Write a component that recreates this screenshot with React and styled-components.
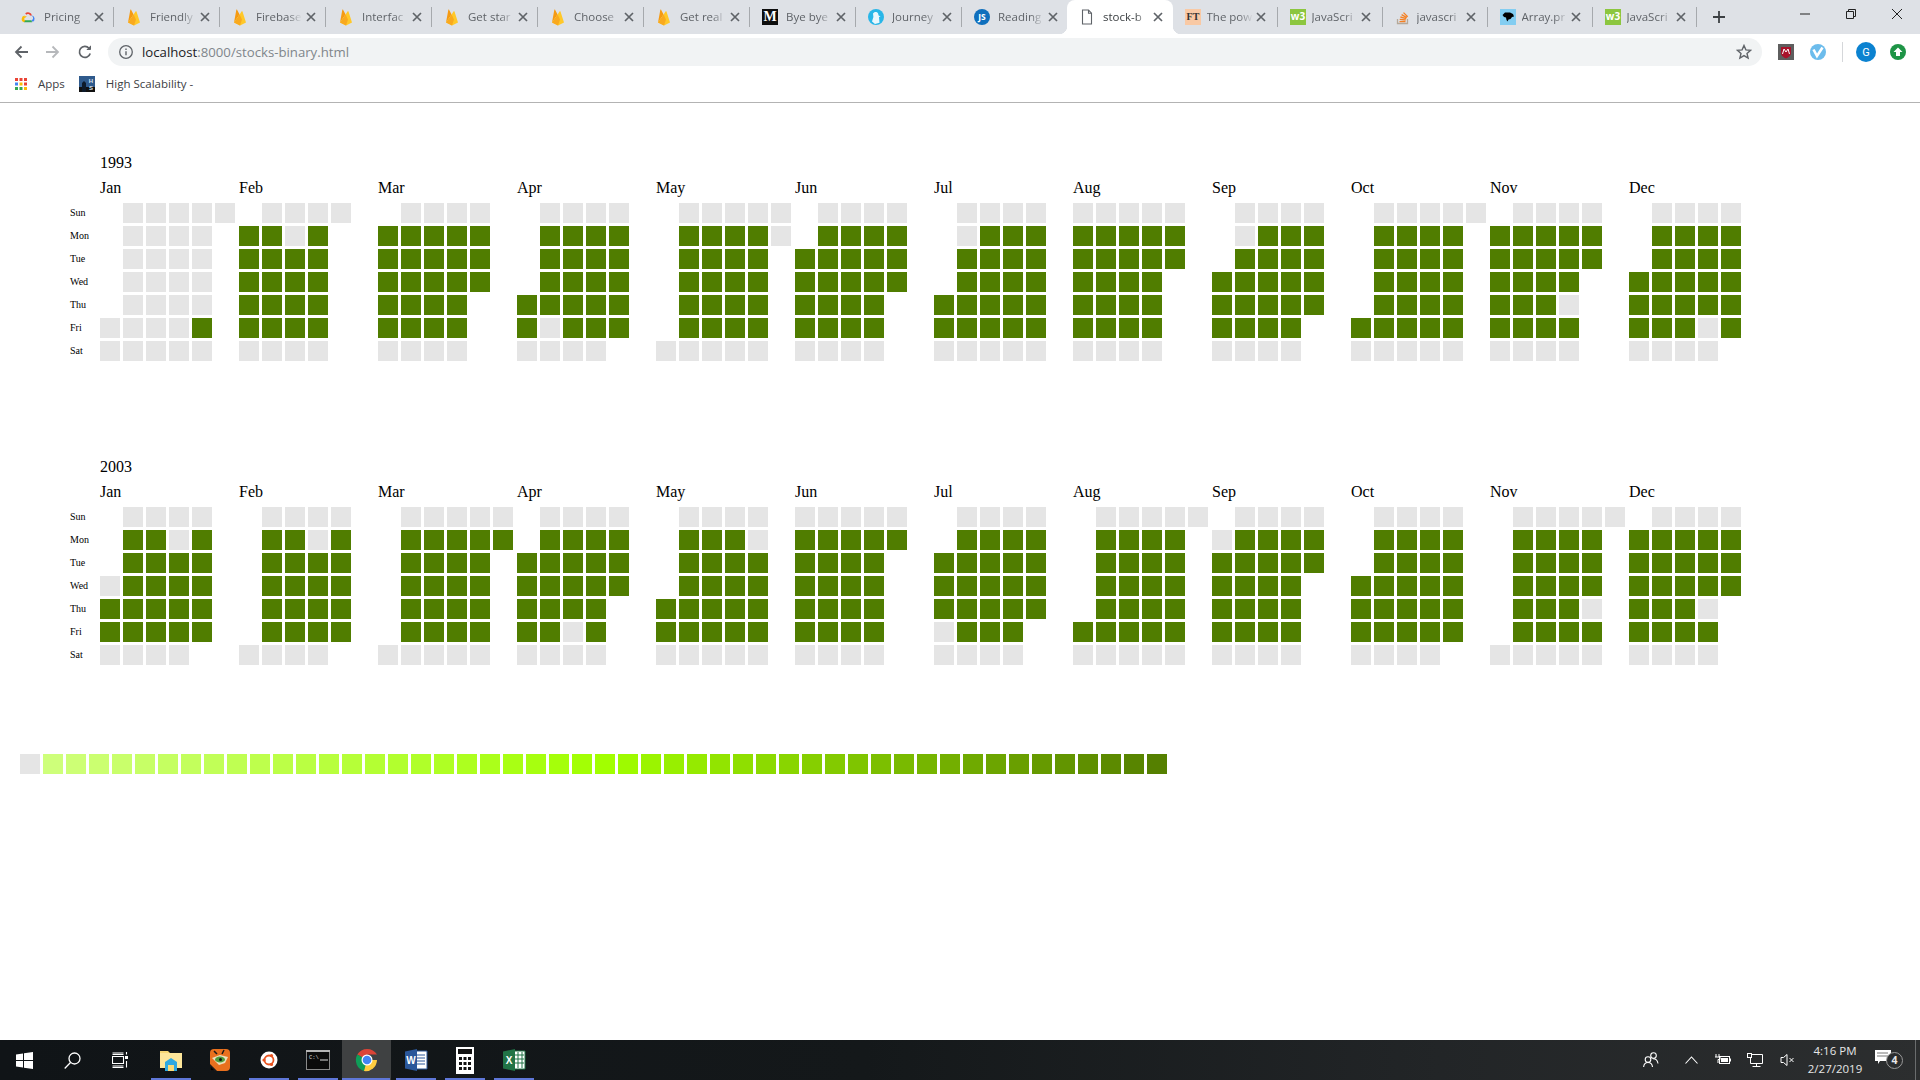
import React from 'react';
import styled, { createGlobalStyle } from 'styled-components';

const Global = createGlobalStyle`
  html, body { margin: 0; padding: 0; background: #fff; }
  body { font-family: "Liberation Serif", serif; overflow: hidden; }
`;

const UI = '"Open Sans", "Noto Sans", sans-serif';

const Page = styled.div`
  width: 1920px; height: 1080px; display: flex; flex-direction: column; overflow: hidden;
`;
const BrowserChrome = styled.header`flex: none; background: #fff;`;
const TabStrip = styled.div`
  height: 34px; background: #dee1e6; display: flex; align-items: stretch; padding-left: 8px;
`;
const Tab = styled.div`
  position: relative; flex: none; width: ${p => p.$w}px; height: 34px; display: flex; align-items: center;
  background: ${p => (p.$active ? '#fff' : 'transparent')};
  border-radius: ${p => (p.$active ? '8px 8px 0 0' : '0')};
  ${p => p.$active ? `
    &::before, &::after { content: ''; position: absolute; bottom: 0; width: 8px; height: 8px; }
    &::before { left: -8px; background: radial-gradient(circle at 0 0, #dee1e6 8px, #fff 8.5px); }
    &::after { right: -8px; background: radial-gradient(circle at 100% 0, #dee1e6 8px, #fff 8.5px); }
  ` : ''}
`;
const FaviconSlot = styled.span`
  flex: none; width: 16px; height: 16px; margin-left: 12px; display: flex; align-items: center; justify-content: center;
`;
const TabTitle = styled.span`
  flex: none; width: 48px; margin-left: ${p => (p.$late ? 5.5 : 8)}px; overflow: hidden; white-space: nowrap;
  font: 11.5px/16px ${UI}; color: ${p => (p.$active ? '#3c4043' : '#5f6368')};
  -webkit-mask-image: linear-gradient(to right, #000 32px, transparent 46px);
  mask-image: linear-gradient(to right, #000 32px, transparent 46px);
`;
const TabClose = styled.svg`flex: none; width: 10px; height: 10px; margin-left: ${p => (p.$late ? 1 : 2)}px;`;
const TabSep = styled.span`
  position: absolute; right: 0; top: 7px; width: 1px; height: 20px; background: #a6a9ad;
`;
const NewTab = styled.svg`flex: none; width: 12px; height: 12px; margin: 11px 0 0 16px;`;
const WindowControls = styled.div`margin-left: auto; display: flex;`;
const WinButton = styled.span`
  width: 46px; height: 28px; display: flex; align-items: center; justify-content: center;
`;
const Toolbar = styled.div`
  height: 34px; box-sizing: border-box; display: flex; align-items: center; padding: 2px 6px 0 5px; background: #fff;
`;
const NavButton = styled.span`
  flex: none; width: 32px; height: 28px; display: flex; align-items: center; justify-content: center;
`;
const Omnibox = styled.div`
  flex: 1; height: 28px; margin: 0 8px 0 7px; border-radius: 14px; background: #f1f3f4;
  display: flex; align-items: center; padding: 0 10px;
`;
const Url = styled.span`
  margin-left: 8px; font: 13.2px/28px ${UI}; color: #80868b; white-space: nowrap;
`;
const UrlHost = styled.span`color: #202124;`;
const StarSlot = styled.span`margin-left: auto; display: flex; width: 16px; justify-content: center;`;
const ToolbarSep = styled.span`flex: none; width: 1px; height: 20px; background: #d5d7da; margin: 0 7px 0 8px;`;
const BookmarkBar = styled.div`
  height: 34px; box-sizing: content-box; border-bottom: 1px solid #b3b3b3; display: flex; align-items: center; padding-left: 15px;
`;
const BookmarkInner = styled.div`display: flex; align-items: center; margin-top: -2px;`;
const Bookmark = styled.span`
  display: flex; align-items: center; gap: 11px; margin-right: 14px;
  font: 11.5px/16px ${UI}; color: #3c4043; white-space: nowrap;
`;

const Main = styled.main`flex: 1; padding: 51px 0 0 20px; min-height: 0;`;
const YearBlock = styled.section`margin-bottom: ${p => p.$after}px;`;
const YearLabel = styled.div`
  margin-left: 80px; height: 25px; font: 16px/18px "Liberation Serif", serif; color: #000;
`;
const YearBody = styled.div`display: flex; align-items: flex-end;`;
const DayColumn = styled.div`
  flex: none; width: 80px; padding-left: 50px; box-sizing: border-box; display: grid; grid-auto-rows: 20px; row-gap: 3px;
`;
const DayLabel = styled.span`
  font: 10px/20px "Liberation Serif", serif; color: #000;
`;
const MonthRow = styled.div`display: flex;`;
const Month = styled.div`flex: none; width: 139px;`;
const MonthName = styled.div`
  height: 24px; font: 16px/18px "Liberation Serif", serif; color: #000;
`;
const MonthGrid = styled.div`
  display: grid; grid-template-columns: repeat(6, 20px); grid-auto-rows: 20px; gap: 3px;
`;
const Cell = styled.span`
  background: ${p => (p.$kind === '1' ? '#507d00' : p.$kind === '0' ? '#e5e5e5' : 'transparent')};
`;
const Legend = styled.div`display: flex; gap: 3px;`;
const Swatch = styled.span`flex: none; width: 20px; height: 20px;`;

const Taskbar = styled.footer`
  flex: none; height: 40px; display: flex; align-items: stretch; color: #fff;
  background: linear-gradient(90deg, #101417 0%, #14181a 45%, #222527 75%, #2c2e2f 100%);
`;
const SystemButton = styled.span`
  flex: none; width: 48px; display: flex; align-items: center; justify-content: center;
`;
const AppGroup = styled.div`display: flex; margin-left: 2px;`;
const AppButton = styled.span`
  position: relative; flex: none; width: 49px; display: flex; align-items: center; justify-content: center;
  background: ${p => (p.$active ? '#3f4142' : 'transparent')};
  &::after {
    content: ''; position: absolute; bottom: 0; height: 2px;
    left: ${p => (p.$active ? '0' : '4.5px')}; right: ${p => (p.$active ? '1px' : '4.5px')};
    background: ${p => (p.$open ? '#5f77d8' : 'transparent')};
  }
`;
const Tray = styled.div`margin-left: auto; display: flex; align-items: stretch; padding-right: 4px;`;
const TrayIcon = styled.span`
  flex: none; width: 32px; display: flex; align-items: center; justify-content: center;
  margin-right: ${p => p.$mr || 0}px;
`;
const Clock = styled.div`
  flex: none; width: 64px; display: flex; flex-direction: column; align-items: center; justify-content: center;
  font: 11.5px/18px ${UI}; color: #e6e6e6; white-space: nowrap;
`;
const Notify = styled.span`
  position: relative; flex: none; width: 40px; margin-right: 8px; display: flex; align-items: center; justify-content: center;
`;
const NotifyGlyph = styled.svg`width: 16px; height: 14px; margin: -6px 0 0 -8px;`;
const NotifyBadge = styled.span`
  position: absolute; left: 19px; top: 12px; width: 15px; height: 15px; border-radius: 50%;
  background: #2b2d2e; border: 1px solid #9a9a9a; font: 700 10.5px/15px ${UI}; text-align: center; color: #e8e8e8;
`;
const DesktopEdge = styled.span`flex: none; width: 1px; background: #6a6c6d;`;

const SerifMark = styled.span`
  width: 16px; height: 16px; display: block; text-align: center;
  background: ${p => p.$bg}; color: ${p => p.$fg};
  font: 700 ${p => p.$size}px/16px "Liberation Serif", serif;
`;
const JsBadge = styled.span`
  width: 16px; height: 16px; border-radius: 50%; display: block; text-align: center;
  background: #0f6fbd; color: #fff; font: 700 8.5px/16px ${UI};
`;
const W3Badge = styled.span`
  width: 16px; height: 16px; display: block; text-align: center; background: #8cc63f; color: #fff;
  font: 700 10px/14px ${UI};
`;

const Flame = () => (
  <svg width="14" height="17" viewBox="0 0 14 17">
    <path d="M1 13.5 3.3 1c.1-.5.7-.6.9-.1L6.6 5.5 1 13.5z" fill="#f59a12" />
    <path d="M6.6 5.5 8.5 2.600c.2-.4.8-.4 1 0L13 13.5 7 16.5 1 13.500z" fill="#ffc829" />
    <path d="M1 13.500 6.600 5.500 9 10.500 7 16.500z" fill="#f9a91e" />
  </svg>
);
const GCloud = () => (
  <svg width="16" height="16" viewBox="0 0 16 16">
    <path d="M5.2 4.2A4.2 4.2 0 0 1 12 6.4l-2 .2a2.2 2.2 0 0 0-3.7-.9z" fill="#ea4335" />
    <path d="M12 6.4a3.4 3.4 0 0 1 .6 6.4l-1.3-1.6a1.5 1.5 0 0 0-1.3-4.6z" fill="#4285f4" />
    <path d="M4 13.2h8.2l-.9-2H4.2z" fill="#34a853" />
    <path d="M4.6 6.6A3.4 3.4 0 0 0 4 13.2l1.2-1.9a1.5 1.5 0 0 1 .5-2.9l1-1.4a3 3 0 0 0-2.1.6z" fill="#fbbc05" />
  </svg>
);
const Journey = () => (
  <svg width="16" height="16" viewBox="0 0 16 16">
    <circle cx="8" cy="8" r="8" fill="#29b6e8" />
    <path d="M5 4.5c1-2 4-2.2 5-.2l.6 2.2 2 1-1.6.6.5 5.6L7 15 4 12.6 5.4 8z" fill="#e9f7fd" />
  </svg>
);
const DocIcon = () => (
  <svg width="12" height="16" viewBox="0 0 12 16" fill="#fff" stroke="#5f6368" strokeWidth="1.1">
    <path d="M1.5 1h6l3 3.2V15h-9z" /><path d="M7.5 1v3.2h3" fill="none" />
  </svg>
);
const StackIcon = () => (
  <svg width="16" height="16" viewBox="0 0 16 16" fill="none">
    <path d="M2.5 10v4.5h10V10" stroke="#b5a99a" strokeWidth="1.3" />
    <path d="M4.5 12.6h6M4.7 10.4l6 .6M5.4 8l5.8 1.6M6.6 5.6l5.2 3M8.5 3.6l4.2 4.2" stroke="#f48024" strokeWidth="1.3" />
  </svg>
);
const ArrayIcon = () => (
  <svg width="16" height="16" viewBox="0 0 16 16">
    <rect width="16" height="16" fill="#83cdf1" />
    <path d="M2.5 6 5 3.5h5l3 1.5 1 2.5-2 .5-1.5 2-2 .5-1 2-1-1.5-.5-2.5-2-.5z" fill="#000" />
  </svg>
);

const tabs = [
  ['Pricing', <GCloud />, 106], ['Friendly', <Flame />, 106], ['Firebase', <Flame />, 106], ['Interfac', <Flame />, 106],
  ['Get star', <Flame />, 106], ['Choose', <Flame />, 106], ['Get real', <Flame />, 106],
  ['Bye bye', <SerifMark $bg="#0e0e0e" $fg="#fff" $size={14}>M</SerifMark>, 106],
  ['Journey', <Journey />, 106], ['Reading', <JsBadge>JS</JsBadge>, 105], ['stock-b', <DocIcon />, 106],
  ['The pow', <SerifMark $bg="#f9c9a4" $fg="#333" $size={10}>FT</SerifMark>, 105],
  ['JavaScri', <W3Badge>w3</W3Badge>, 105], ['javascri', <StackIcon />, 105], ['Array.pr', <ArrayIcon />, 105],
  ['JavaScri', <W3Badge>w3</W3Badge>, 104],
];
const ACTIVE_TAB = 10;
const DIVIDERLESS_TAB = 9;

const days = ['Sun', 'Mon', 'Tue', 'Wed', 'Thu', 'Fri', 'Sat'];
const months = ['Jan', 'Feb', 'Mar', 'Apr', 'May', 'Jun', 'Jul', 'Aug', 'Sep', 'Oct', 'Nov', 'Dec'];

const y1993 = [
  ['.00000', '.0000', '.0000', '.0000', '.0000', '00001', '00000'],
  ['.0000', '1101', '1111', '1111', '1111', '1111', '0000'],
  ['.0000', '11111', '11111', '11111', '1111', '1111', '0000'],
  ['.0000', '.1111', '.1111', '.1111', '11111', '10111', '0000'],
  ['.00000', '.11110', '.1111', '.1111', '.1111', '.1111', '00000'],
  ['.0000', '.1111', '11111', '11111', '1111', '1111', '0000'],
  ['.0000', '.0111', '.1111', '.1111', '11111', '11111', '00000'],
  ['00000', '11111', '11111', '1111', '1111', '1111', '0000'],
  ['.0000', '.0111', '.1111', '11111', '11111', '1111', '0000'],
  ['.00000', '.1111', '.1111', '.1111', '.1111', '11111', '00000'],
  ['.0000', '11111', '11111', '1111', '1110', '1111', '0000'],
  ['.0000', '.1111', '.1111', '11111', '11111', '11101', '0000'],
];
const y2003 = [
  ['.0000', '.1101', '.1111', '01111', '11111', '11111', '0000'],
  ['.0000', '.1101', '.1111', '.1111', '.1111', '.1111', '0000'],
  ['.00000', '.11111', '.1111', '.1111', '.1111', '.1111', '00000'],
  ['.0000', '.1111', '11111', '11111', '1111', '1101', '0000'],
  ['.0000', '.1110', '.1111', '.1111', '11111', '11111', '00000'],
  ['00000', '11111', '1111', '1111', '1111', '1111', '0000'],
  ['.0000', '.1111', '11111', '11111', '11111', '0111', '0000'],
  ['.00000', '.1111', '.1111', '.1111', '.1111', '11111', '00000'],
  ['.0000', '01111', '11111', '1111', '1111', '1111', '0000'],
  ['.0000', '.1111', '.1111', '11111', '11111', '11111', '0000'],
  ['.00000', '.1111', '.1111', '.1111', '.1110', '.1111', '00000'],
  ['.0000', '11111', '11111', '11111', '1110', '1111', '0000'],
];

const Year = ({ year, data, after }) => (
  <YearBlock $after={after}>
    <YearLabel>{year}</YearLabel>
    <YearBody>
      <DayColumn>{days.map(d => <DayLabel key={d}>{d}</DayLabel>)}</DayColumn>
      <MonthRow>
        {months.map((m, i) => (
          <Month key={m}>
            <MonthName>{m}</MonthName>
            <MonthGrid>
              {data[i].flatMap((row, r) =>
                row.padEnd(6, '.').split('').map((c, k) => <Cell key={`${r}-${k}`} $kind={c} />)
              )}
            </MonthGrid>
          </Month>
        ))}
      </MonthRow>
    </YearBody>
  </YearBlock>
);

const legendColor = i => {
  if (i === 0) return '#e5e5e5';
  const light = i <= 25 ? 74 - (i - 1) : 50 - (i - 25) * (25 / 24);
  const hue = i <= 25 ? 82 : 82 - (i - 25) / 12;
  return `hsl(${hue}, 100%, ${light}%)`;
};

const Chrome = () => (
  <BrowserChrome>
    <TabStrip>
      {tabs.map(([title, icon, w], i) => {
        const active = i === ACTIVE_TAB;
        const late = i > ACTIVE_TAB;
        return (
          <Tab key={i} $w={w} $active={active}>
            <FaviconSlot>{icon}</FaviconSlot>
            <TabTitle $active={active} $late={late}>{title}</TabTitle>
            <TabClose viewBox="0 0 10 10" $late={late}><path d="M1 1l8 8M9 1l-8 8" stroke="#5f6368" strokeWidth="1.7" /></TabClose>
            {!active && i !== DIVIDERLESS_TAB && <TabSep />}
          </Tab>
        );
      })}
      <NewTab viewBox="0 0 12 12"><path d="M6 0v12M0 6h12" stroke="#3c4043" strokeWidth="1.8" /></NewTab>
      <WindowControls>
        <WinButton><svg width="10" height="10" viewBox="0 0 10 10"><path d="M0 5h10" stroke="#222" /></svg></WinButton>
        <WinButton><svg width="10" height="10" viewBox="0 0 10 10" fill="none" stroke="#222"><path d="M.5 2.5h7v7h-7zM2.5 2.5v-2h7v7h-2" /></svg></WinButton>
        <WinButton><svg width="10" height="10" viewBox="0 0 10 10"><path d="M0 0l10 10M10 0L0 10" stroke="#222" /></svg></WinButton>
      </WindowControls>
    </TabStrip>
    <Toolbar>
      <NavButton><svg width="14" height="14" viewBox="0 0 14 14" fill="none" stroke="#5f6368" strokeWidth="1.8"><path d="M14 7H2M7.5 1.5 2 7l5.5 5.5" /></svg></NavButton>
      <NavButton><svg width="14" height="14" viewBox="0 0 14 14" fill="none" stroke="#b6b8bb" strokeWidth="1.8"><path d="M0 7h12M6.5 1.5 12 7l-5.500 5.500" /></svg></NavButton>
      <NavButton><svg width="14" height="14" viewBox="0 0 14 14" fill="none" stroke="#5f6368" strokeWidth="1.7"><path d="M12.200 8.500A5.500 5.500 0 1 1 11 3.200" /><path d="M12.500.8v3.700H8.800" fill="#5f6368" strokeWidth="1" /></svg></NavButton>
      <Omnibox>
        <svg width="16" height="16" viewBox="0 0 16 16" fill="none"><circle cx="8" cy="8" r="6.300" stroke="#5f6368" strokeWidth="1.300" /><path d="M8 7.200v4M8 4.500v1.500" stroke="#5f6368" strokeWidth="1.400" /></svg>
        <Url><UrlHost>localhost</UrlHost>:8000/stocks-binary.html</Url>
        <StarSlot>
          <svg width="16" height="16" viewBox="0 0 16 16" fill="none" stroke="#5f6368" strokeWidth="1.400"><path d="M8 1.500 9.900 5.900l4.700.4-3.600 3.100 1.100 4.600L8 11.600l-4.100 2.400L5 9.400 1.400 6.300l4.700-.4z" /></svg>
        </StarSlot>
      </Omnibox>
      <NavButton>
        <svg width="16" height="16" viewBox="0 0 16 16"><rect width="16" height="16" fill="#5e5e5e" /><path d="M3 3h10v6c0 3-3 4.500-5 5.500C6 13.500 3 12 3 9z" fill="#a8122a" /><path d="M4.500 10 6 5l2 3 2-3 1.500 5" fill="none" stroke="#fff" /></svg>
      </NavButton>
      <NavButton>
        <svg width="16" height="16" viewBox="0 0 16 16"><circle cx="8" cy="8" r="8" fill="#6cbcec" /><path d="M3.500 5.500 7 12l5.500-8.500" fill="none" stroke="#fff" strokeWidth="2.600" /></svg>
      </NavButton>
      <ToolbarSep />
      <NavButton>
        <svg width="20" height="20" viewBox="0 0 20 20"><circle cx="10" cy="10" r="10" fill="#0b82d0" /><text x="10" y="14" textAnchor="middle" fontFamily="Roboto, sans-serif" fontSize="11" fill="#fff">G</text></svg>
      </NavButton>
      <NavButton>
        <svg width="16" height="16" viewBox="0 0 16 16"><circle cx="8" cy="8" r="8" fill="#1e9446" /><path d="M8 3.500 12.500 8H10v4H6V8H3.500z" fill="#fff" /></svg>
      </NavButton>
    </Toolbar>
    <BookmarkBar>
      <BookmarkInner>
        <Bookmark>
          <svg width="12" height="12" viewBox="0 0 12 12">
            {[['#ea4335', '#ea4335', '#ea4335'], ['#4285f4', '#fbbc05', '#ea4335'], ['#34a853', '#34a853', '#fbbc05']].flatMap((row, r) =>
              row.map((c, k) => <rect key={`${r}${k}`} x={k * 4.500} y={r * 4.500} width="3" height="3" fill={c} />))}
          </svg>
          Apps
        </Bookmark>
        <Bookmark>
          <svg width="16" height="16" viewBox="0 0 16 16"><rect width="16" height="16" fill="#2f5a8c" /><rect y="11" width="16" height="5" fill="#111" /><path d="M3 16V7l2-2 2 2v9z" fill="#0d1a2a" /><text x="12" y="7" textAnchor="middle" fontFamily="Liberation Sans" fontSize="6" fontWeight="700" fill="#dfe8f2">H</text><text x="12" y="14" textAnchor="middle" fontFamily="Liberation Sans" fontSize="6" fontWeight="700" fill="#dfe8f2">S</text></svg>
          High Scalability -
        </Bookmark>
      </BookmarkInner>
    </BookmarkBar>
  </BrowserChrome>
);

const Win = () => (
  <svg width="17" height="17" viewBox="0 0 17 17" fill="#fff"><path d="M0 2.400 7 1.400v6.600H0zM8 1.300 17 0v8H8zM0 9h7v6.600l-7-1zM8 9h9v8l-9-1.300z" /></svg>
);
const apps = [
  { open: true, icon: (
    <svg width="24" height="22" viewBox="0 0 24 22"><path d="M1 2h8l2 2h12v15H1z" fill="#f6d774" /><path d="M1 4h22v15H1z" fill="#fde69a" /><path d="M6 22v-9l6-4 6 4v9h-4v-5h-4v5z" fill="#2ea8e0" /><rect x="9" y="16" width="6" height="6" fill="#f9d978" /></svg>
  ) },
  { icon: (
    <svg width="20" height="22" viewBox="0 0 20 22"><rect width="20" height="22" rx="4" fill="#e8701e" /><path d="M2 9 10 6l8 2-3 6-6 2z" fill="#e9dfbd" /><ellipse cx="10" cy="10.500" rx="5" ry="3" fill="#4d9a3b" /><circle cx="10.500" cy="10.500" r="1.500" fill="#111" /><path d="M0 16l6 6H0zM4 2l3 3M14 1l-2 4" stroke="#1a1a1a" strokeWidth="1.500" /></svg>
  ) },
  { open: true, icon: (
    <svg width="18" height="18" viewBox="0 0 18 18"><circle cx="9" cy="9" r="8.500" fill="#fff" /><circle cx="9" cy="9" r="4.500" fill="none" stroke="#e95420" strokeWidth="1.800" /><circle cx="4" cy="9" r="1.600" fill="#e95420" /><circle cx="11.500" cy="4.600" r="1.600" fill="#e95420" /><circle cx="11.500" cy="13.400" r="1.600" fill="#e95420" /></svg>
  ) },
  { open: true, icon: (
    <svg width="24" height="20" viewBox="0 0 24 20"><rect x=".5" y=".5" width="23" height="19" fill="#0b0b0b" stroke="#8a8a8a" /><rect width="24" height="2" fill="#b5b5b5" /><text x="3" y="9" fontFamily="Liberation Mono" fontSize="5.500" fill="#ddd">C:\</text><path d="M14 10h8" stroke="#ddd" /></svg>
  ) },
  { open: true, active: true, icon: (
    <svg width="24" height="24" viewBox="0 0 24 24"><path d="M12 12 2.300 6.500A11.500 11.500 0 0 1 22 6.500H12z" fill="#db4437" /><path d="M12 12 2.300 6.500A11.500 11.500 0 0 0 9 23.100z" fill="#0f9d58" /><path d="M12 12h10a11.500 11.500 0 0 1-13 11.100z" fill="#ffcd40" /><circle cx="12" cy="12" r="5.500" fill="#fff" /><circle cx="12" cy="12" r="4.300" fill="#4285f4" /></svg>
  ) },
  { open: true, icon: (
    <svg width="24" height="24" viewBox="0 0 24 24"><path d="M10 3h13v18H10z" fill="#fff" stroke="#2b579a" /><path d="M13 7h8M13 10h8M13 13h8M13 16h8" stroke="#2b579a" /><path d="M1 3.500 13 1v22L1 20.500z" fill="#2b579a" /><text x="7" y="16" textAnchor="middle" fontFamily="Liberation Sans" fontSize="10" fontWeight="700" fill="#fff">W</text></svg>
  ) },
  { open: true, icon: (
    <svg width="18" height="27" viewBox="0 0 18 27"><rect width="18" height="27" fill="#fff" /><rect x="2" y="2" width="14" height="5" fill="#111" />{[0, 1, 2].flatMap(r => [0, 1, 2].map(c => <rect key={`${r}${c}`} x={3 + c * 4.500} y={10 + r * 5} width="3" height="3" fill="#111" />))}</svg>
  ) },
  { open: true, icon: (
    <svg width="24" height="24" viewBox="0 0 24 24"><path d="M10 3h13v18H10z" fill="#fff" stroke="#217346" /><path d="M13 7h9M13 11h9M13 15h9M16 4v16M20 4v16" stroke="#217346" /><path d="M1 3.500 13 1v22L1 20.500z" fill="#217346" /><text x="7" y="16" textAnchor="middle" fontFamily="Liberation Sans" fontSize="10" fontWeight="700" fill="#fff">X</text></svg>
  ) },
];

const Bar = () => (
  <Taskbar>
    <SystemButton><Win /></SystemButton>
    <SystemButton>
      <svg width="17" height="17" viewBox="0 0 17 17" fill="none" stroke="#fff" strokeWidth="1.300"><circle cx="10.500" cy="6.500" r="5.500" /><path d="M6.500 10.500 .7 16.500" /></svg>
    </SystemButton>
    <SystemButton>
      <svg width="16" height="16" viewBox="0 0 16 16" fill="none" stroke="#fff" strokeWidth="1.100"><path d="M.5 4.500h11v7H.5zM.5 1h11M.5 2.500h11M.5 14h11M.5 15.500h11" /><rect x="13" y="4" width="3" height="3" fill="#fff" stroke="none" /><path d="M14.500 9v6.500M14.500 0v2.500" /></svg>
    </SystemButton>
    <AppGroup>
      {apps.map((a, i) => <AppButton key={i} $open={a.open} $active={a.active}>{a.icon}</AppButton>)}
    </AppGroup>
    <Tray>
      <TrayIcon $mr={8}>
        <svg width="16" height="16" viewBox="0 0 16 16" fill="none" stroke="#fff" strokeWidth="1.100"><circle cx="10.500" cy="3.500" r="2.800" /><circle cx="5" cy="7.500" r="2.800" /><path d="M.6 15c.3-3 2-4.500 4.400-4.500S9.200 12 9.500 15M10 6.800c2.600 0 4.600 1.700 5 4.700" /></svg>
      </TrayIcon>
      <TrayIcon>
        <svg width="13" height="8" viewBox="0 0 13 8" fill="none" stroke="#fff" strokeWidth="1.100"><path d="M.5 7.500 6.500 1l6 6.500" /></svg>
      </TrayIcon>
      <TrayIcon>
        <svg width="16" height="14" viewBox="0 0 16 14" fill="none" stroke="#fff"><path d="M1 1v3M4 1v3M0 4h5v2.500H3V10" /><rect x="4.500" y="3.500" width="10" height="7" /><rect x="6" y="5" width="7" height="4" fill="#fff" stroke="none" /><path d="M15.500 5.500v3" /></svg>
      </TrayIcon>
      <TrayIcon>
        <svg width="16" height="14" viewBox="0 0 16 14" fill="none" stroke="#fff"><path d="M3.500 1.500h12v9h-12zM9.500 10.500v3M5.500 13.500h8" /><rect x=".5" y=".5" width="4" height="4" fill="#2a2c2d" /></svg>
      </TrayIcon>
      <TrayIcon>
        <svg width="15" height="14" viewBox="0 0 15 14" fill="none" stroke="#fff"><path d="M1 4.500h2.500L7 1.500v11L3.500 9.500H1z" /><path d="M9.500 5l4 4M13.500 5l-4 4" /></svg>
      </TrayIcon>
      <Clock><span>4:16 PM</span><span>2/27/2019</span></Clock>
      <Notify>
        <NotifyGlyph viewBox="0 0 16 14"><path d="M0 0h16v11H5l-2 3v-3H0z" fill="#fff" /><path d="M2 3h11M2 6h11" stroke="#777" /></NotifyGlyph>
        <NotifyBadge>4</NotifyBadge>
      </Notify>
      <DesktopEdge />
    </Tray>
  </Taskbar>
);

export default function App() {
  return (
    <Page>
      <Global />
      <Chrome />
      <Main>
        <Year year="1993" data={y1993} after={97} />
        <Year year="2003" data={y2003} after={89} />
        <Legend>
          {Array.from({ length: 50 }, (_, i) => <Swatch key={i} style={{ background: legendColor(i) }} />)}
        </Legend>
      </Main>
      <Bar />
    </Page>
  );
}
